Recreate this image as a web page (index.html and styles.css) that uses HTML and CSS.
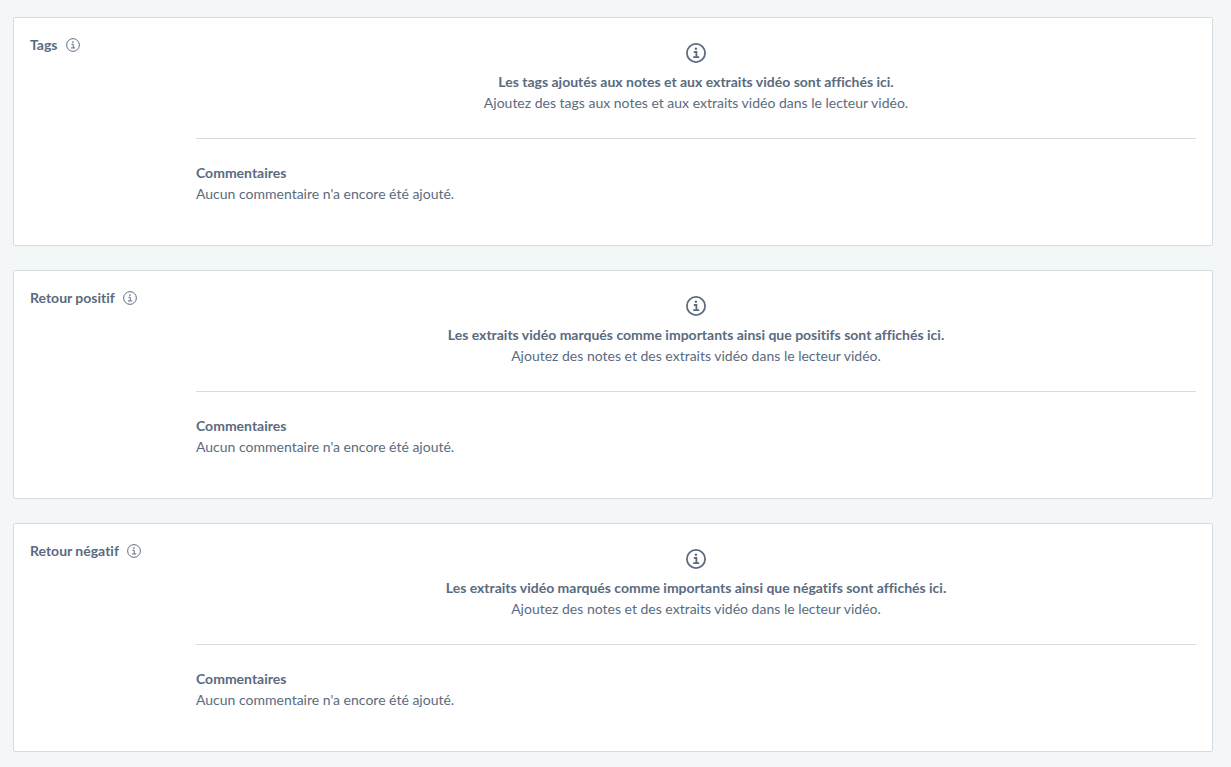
FILE: index.html
```html
<!DOCTYPE html>
<html lang="fr">
<head>
    <meta charset="UTF-8">
    <meta name="viewport" content="width=device-width, initial-scale=1.0">
    <title>Commentaires</title>
    <link rel="stylesheet" href="styles.css">
</head>
<body>
    <svg class="sprite" aria-hidden="true">
        <symbol id="info" viewBox="0 0 20 20">
            <circle cx="10" cy="10" r="9.1" fill="none" stroke="currentColor"/>
            <circle cx="9.9" cy="5.7" r="1.2" fill="currentColor"/>
            <path d="M7.8 9H10.4V14.2M7.2 14.2H13.2" fill="none" stroke="currentColor"/>
        </symbol>
    </svg>
    <main>
        <section class="card">
            <h2 class="card-title">Tags <svg class="icon-small"><use href="#info"/></svg></h2>
            <div class="card-content">
                <div class="empty">
                    <svg class="icon-large"><use href="#info"/></svg>
                    <p class="strong">Les tags ajoutés aux notes et aux extraits vidéo sont affichés ici.</p>
                    <p>Ajoutez des tags aux notes et aux extraits vidéo dans le lecteur vidéo.</p>
                </div>
                <div class="comments">
                    <h3>Commentaires</h3>
                    <p>Aucun commentaire n'a encore été ajouté.</p>
                </div>
            </div>
        </section>
        <section class="card">
            <h2 class="card-title">Retour positif <svg class="icon-small"><use href="#info"/></svg></h2>
            <div class="card-content">
                <div class="empty">
                    <svg class="icon-large"><use href="#info"/></svg>
                    <p class="strong">Les extraits vidéo marqués comme importants ainsi que positifs sont affichés ici.</p>
                    <p>Ajoutez des notes et des extraits vidéo dans le lecteur vidéo.</p>
                </div>
                <div class="comments">
                    <h3>Commentaires</h3>
                    <p>Aucun commentaire n'a encore été ajouté.</p>
                </div>
            </div>
        </section>
        <section class="card">
            <h2 class="card-title">Retour négatif <svg class="icon-small"><use href="#info"/></svg></h2>
            <div class="card-content">
                <div class="empty">
                    <svg class="icon-large"><use href="#info"/></svg>
                    <p class="strong">Les extraits vidéo marqués comme importants ainsi que négatifs sont affichés ici.</p>
                    <p>Ajoutez des notes et des extraits vidéo dans le lecteur vidéo.</p>
                </div>
                <div class="comments">
                    <h3>Commentaires</h3>
                    <p>Aucun commentaire n'a encore été ajouté.</p>
                </div>
            </div>
        </section>
    </main>
</body>
</html>
```

FILE: styles.css
```css
* {
    box-sizing: border-box;
}
body {
    margin: 0;
    background-color: #f3f7f8;
    color: #5a6b80;
    font-family: "Lato", sans-serif;
    font-size: 14px;
    line-height: 21px;
    font-variant-ligatures: none;
}
h2,
h3,
p {
    margin: 0;
    font-size: inherit;
}
.sprite {
    display: none;
}
main {
    display: flex;
    flex-direction: column;
    gap: 24px;
    padding: 17px 18px 15px 13px;
}
.card {
    display: flex;
    padding: 16px;
    background-color: white;
    border: 1px solid #d6dbe1;
    border-radius: 2px;
}
.card-title {
    display: flex;
    align-items: center;
    gap: 8px;
    flex: 0 0 166px;
    height: 21px;
}
.card-content {
    flex: 1;
}
.empty {
    padding: 9px 0 25px;
    border-bottom: 1px solid #d6dbe1;
    text-align: center;
}
.strong {
    font-weight: bold;
}
.comments {
    padding: 23px 0 25px;
}
.icon-small {
    width: 14px;
    height: 14px;
    stroke-width: 1.4;
}
.icon-large {
    display: block;
    width: 20px;
    height: 20px;
    margin: 0 auto 8px;
    stroke-width: 1.8;
}
```
